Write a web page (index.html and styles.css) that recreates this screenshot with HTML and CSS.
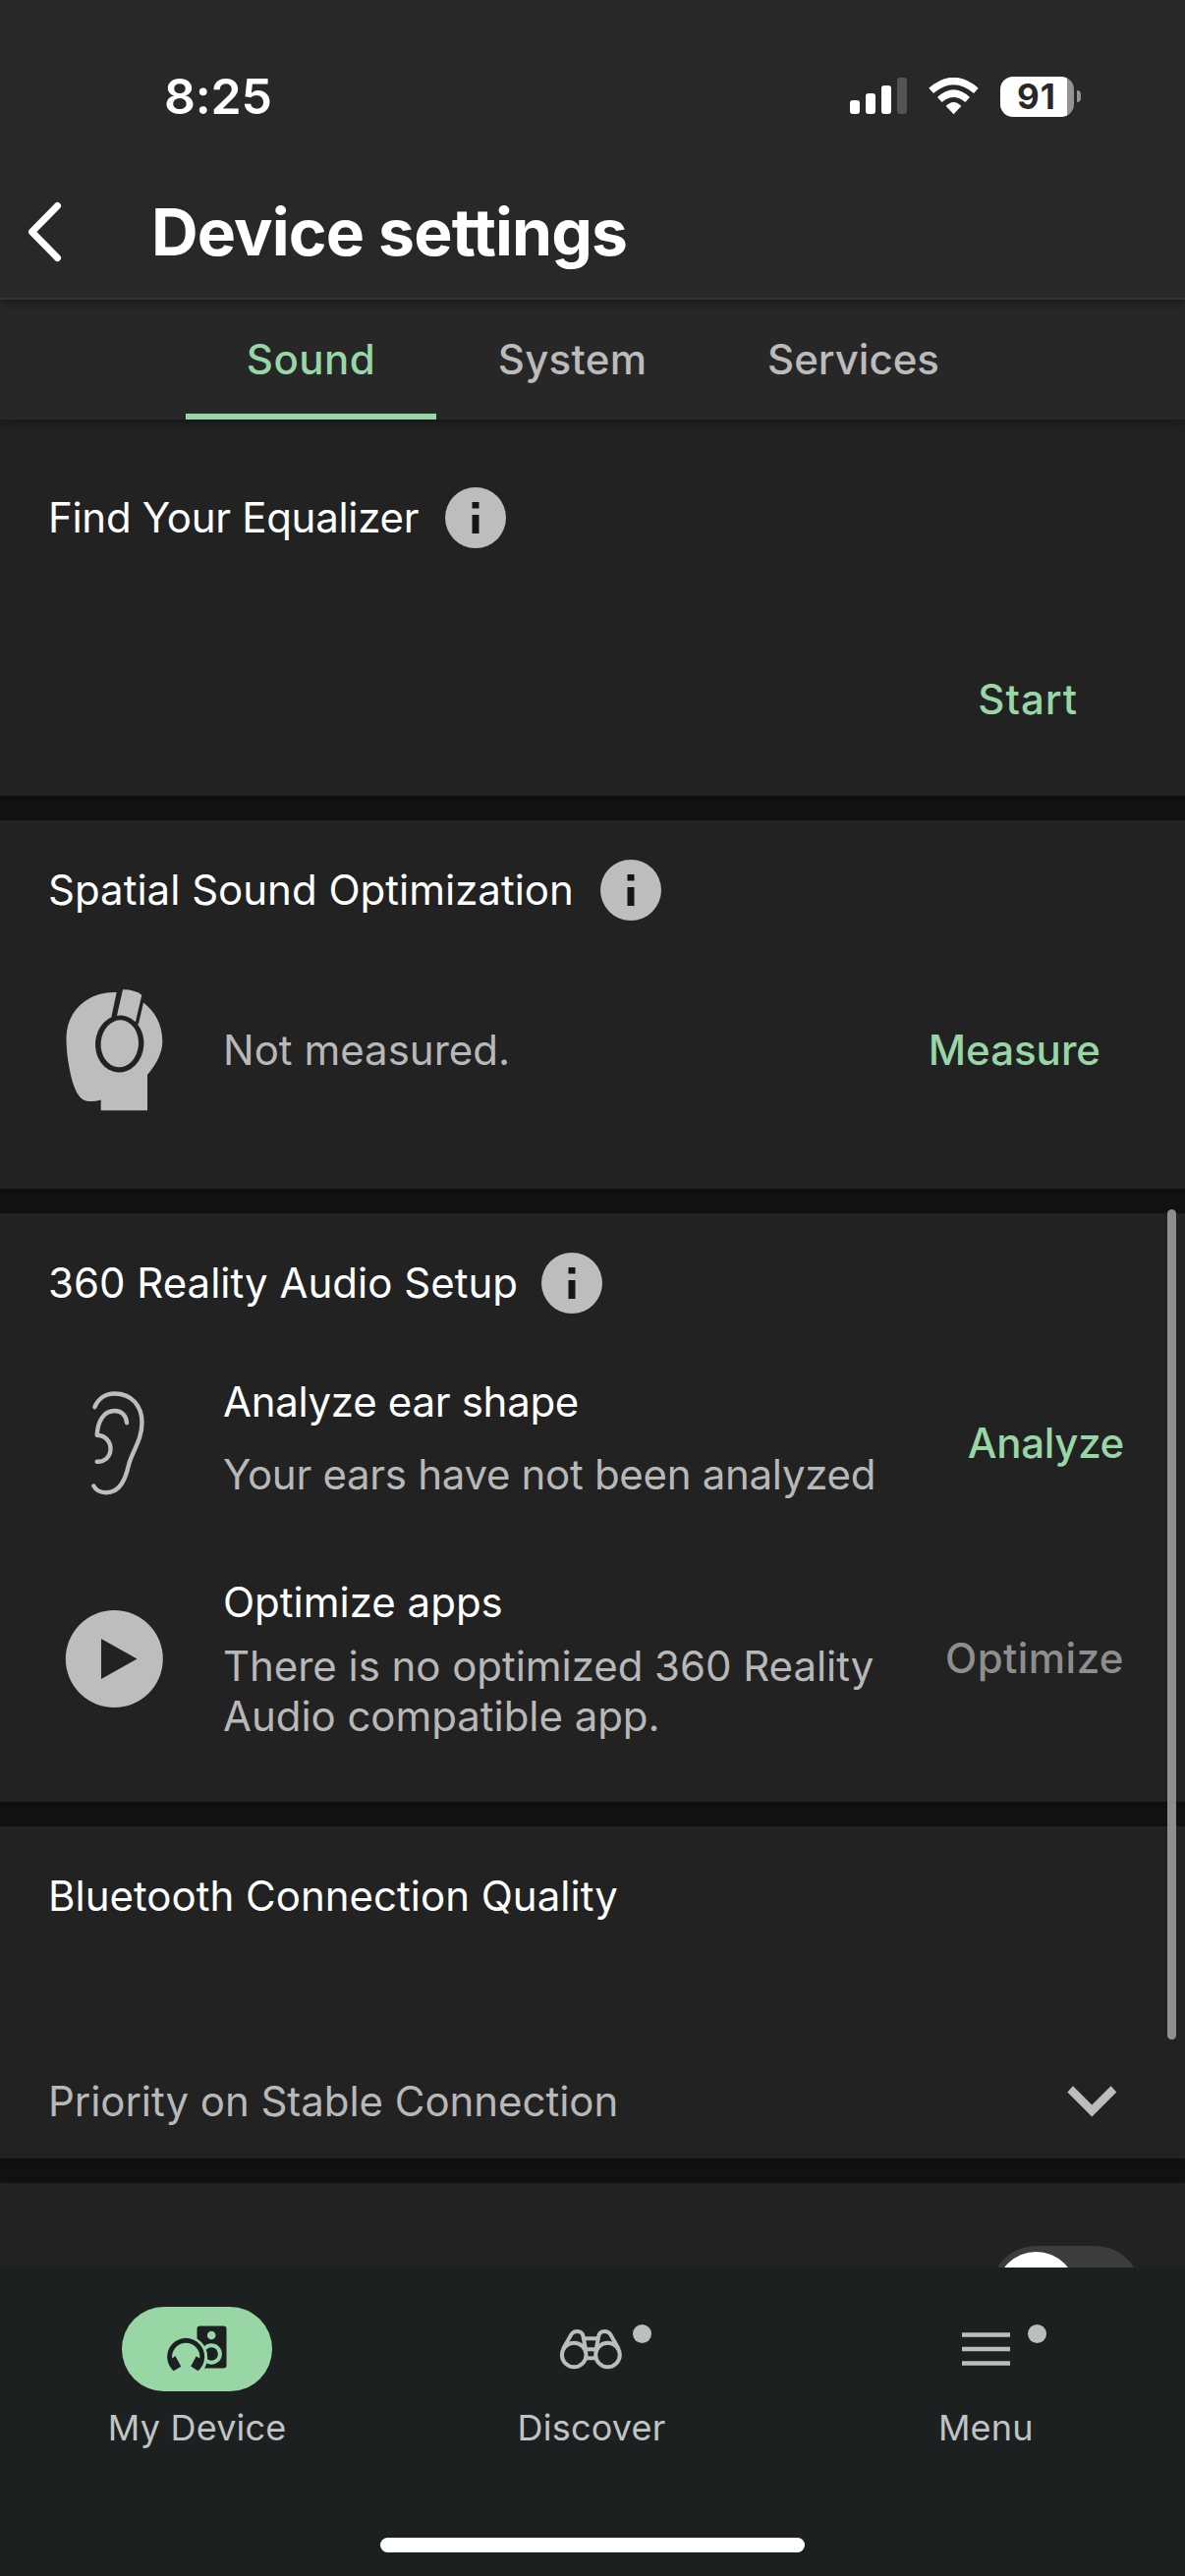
FILE: index.html
```
<!DOCTYPE html>
<html lang="en">
  <head>
    <meta charset="utf-8">
    <title>Device settings</title>
    <link rel="stylesheet" href="styles.css">
  </head>
  <body>
    <!-- status bar and title -->
    <header class="header">
      <div class="status-bar">
        <span class="time">8:25</span>
        <div class="status-icons">
          <svg width="58" height="38" viewBox="0 0 58 38" fill="#fff">
            <rect x="0" y="23" width="10" height="14" rx="3"/>
            <rect x="16" y="16" width="10" height="21" rx="3"/>
            <rect x="32" y="8" width="10" height="29" rx="3"/>
            <rect x="48" y="0" width="10" height="37" rx="3" fill="#535353"/>
          </svg>
          <svg width="51" height="38" viewBox="0 0 51 38" fill="#fff">
            <path d="M.3 10.7Q25.5 -11.3 50.7 10.7L46 16Q25.5 -1.4 5 16Z"/>
            <path d="M9 20Q25.5 4.6 42 20L37.3 25Q25.5 15 13.7 25Z"/>
            <path d="M17.7 29Q25.5 21 33.3 29L25.5 37.3Z"/>
          </svg>
          <div class="battery">
            <span class="battery-level">91</span>
            <span class="battery-tip"></span>
          </div>
        </div>
      </div>
      <div class="title-bar">
        <svg class="back" width="36" height="62" viewBox="0 0 36 62">
          <path d="M31.500 4.500L5.500 31L31.500 57.500"/>
        </svg>
        <h1>Device settings</h1>
      </div>
    </header>

    <nav class="tabs">
      <div class="tab tab-sound active">Sound</div>
      <div class="tab tab-system">System</div>
      <div class="tab tab-services">Services</div>
    </nav>

    <main class="content">
      <section class="card card-equalizer">
        <div class="card-title">
          <h2 class="tight">Find Your Equalizer</h2>
          <svg class="info" viewBox="0 0 62 62"><circle cx="31" cy="31" r="31"/><path d="M27.500 15h7v6.500h-7zM27.500 28h7v19h-7z"/></svg>
        </div>
        <div class="start-row"><span class="action wide">Start</span></div>
      </section>

      <section class="card card-spatial">
        <div class="card-title">
          <h2>Spatial Sound Optimization</h2>
          <svg class="info" viewBox="0 0 62 62"><circle cx="31" cy="31" r="31"/><path d="M27.500 15h7v6.500h-7zM27.500 28h7v19h-7z"/></svg>
        </div>
        <div class="row row-measure">
          <!-- head with headphones -->
          <svg class="row-icon" width="100" height="126" viewBox="0 0 100 126">
            <path class="fill" d="M52.700 4C24 3 2 22 1.500 50C1.500 60 2.500 70 4 78C8 101 14 116 26 115Q32 115 36.700 113.500V124.300H84V88Q99.300 70 99.300 54C99.300 36 91 23 80 14.500L75 36L60 45L47.300 29.500Z"/>
            <path class="fill" d="M59 1.200Q71 1 78.300 6.700L72 34L52.500 30Z"/>
            <ellipse class="hole" cx="55.700" cy="56.500" rx="24.700" ry="29" transform="rotate(4 55.700 56.500)"/>
            <ellipse class="fill" cx="55.800" cy="56.300" rx="19.200" ry="24" transform="rotate(4 55.800 56.300)"/>
          </svg>
          <div class="row-text"><p class="sub">Not measured.</p></div>
          <span class="action">Measure</span>
        </div>
      </section>

      <section class="card card-360">
        <div class="card-title">
          <h2>360 Reality Audio Setup</h2>
          <svg class="info" viewBox="0 0 62 62"><circle cx="31" cy="31" r="31"/><path d="M27.500 15h7v6.500h-7zM27.500 28h7v19h-7z"/></svg>
        </div>
        <div class="row row-analyze">
          <svg class="row-icon line" width="100" height="112" viewBox="-24 0 100 112">
            <path d="M6.400 19.100C10 10.500 17.500 5.500 26.700 5.500C44 5.500 54.500 18 54.500 35C54.500 53 44.500 64 41 78C38 91 33 106.200 17.900 106.200C12 106.200 7.500 103.500 5.300 99.500"/>
            <path d="M39 35.200C38.500 27.500 33.500 23 27 23C15 23 9.500 34 8.700 47.700C17 48 22.500 54 22.500 61.600C22.500 69.500 17 75 8.700 74.800"/>
          </svg>
          <div class="row-text">
            <p class="tight">Analyze ear shape</p>
            <p class="sub tight">Your ears have not been analyzed</p>
          </div>
          <span class="action tight">Analyze</span>
        </div>
        <div class="row row-optimize">
          <svg class="row-icon" width="100" height="100" viewBox="0 0 100 100">
            <circle class="fill" cx="50.300" cy="50.500" r="49.500"/>
            <path class="hole" d="M37 30V71L73.500 50.500Z"/>
          </svg>
          <div class="row-text">
            <p>Optimize apps</p>
            <p class="sub">There is no optimized 360 Reality<br>Audio compatible app.</p>
          </div>
          <span class="action disabled">Optimize</span>
        </div>
      </section>

      <section class="card card-bluetooth">
        <div class="card-title"><h2>Bluetooth Connection Quality</h2></div>
        <div class="select-row">
          <p class="sub">Priority on Stable Connection</p>
          <svg width="51" height="32" viewBox="0 0 51 32">
            <path class="fill" d="M6 .3L.3 6.400L25.300 31.400L50.300 6.400L44.600 .3L25.300 19.500Z"/>
          </svg>
        </div>
      </section>

      <section class="card card-switch">
        <div class="switch"><span class="knob"></span></div>
      </section>
    </main>
    <div class="scrollbar"></div>

    <!-- bottom navigation -->
    <footer class="bottom-nav">
      <div class="nav-items">
        <div class="nav-item">
          <div class="nav-icon selected">
            <svg width="62" height="48" viewBox="0 0 62 48">
              <rect x="30.500" y=".5" width="30" height="43" rx="3" fill="#1d2021"/>
              <circle cx="45.200" cy="10" r="4.300" fill="#98d6a6"/>
              <circle cx="45.200" cy="29" r="10.700" fill="#98d6a6"/>
              <circle cx="45.200" cy="29" r="6.700" fill="#1d2021"/>
              <circle cx="19.200" cy="32.300" r="22" fill="#98d6a6"/>
              <path fill="#1d2021" d="M6.800 46.300A19 19 0 1 1 31.500 46.300L24.200 41.500L29.800 31.300L33.200 33.500A14.100 14.100 0 1 0 5.200 33.500L8.400 31L14.200 41.700Z"/>
            </svg>
          </div>
          <span>My Device</span>
        </div>
        <div class="nav-item">
          <div class="nav-icon">
            <svg class="binoculars" width="66" height="44" viewBox="0 0 66 44">
              <circle cx="15.200" cy="28" r="12.300"/>
              <circle cx="49.500" cy="28" r="12.300"/>
              <path d="M4 22L12.500 7Q14.500 4 18.500 4Q23.500 4 24.500 9L27.500 25"/>
              <path d="M60.700 22L52.200 7Q50.200 4 46.200 4Q41.200 4 40.200 9L37.200 25"/>
              <path d="M25.500 11.300H39M27 22.300H38M27 31.300H38"/>
            </svg>
            <i class="dot"></i>
          </div>
          <span>Discover</span>
        </div>
        <div class="nav-item">
          <div class="nav-icon">
            <svg width="49" height="34" viewBox="0 0 49 34">
              <path d="M0 2.500H49M0 17H49M0 31.500H49" stroke="#bcbebe" stroke-width="4.500"/>
            </svg>
            <i class="dot"></i>
          </div>
          <span>Menu</span>
        </div>
      </div>
      <div class="home-bar"></div>
    </footer>
  </body>
</html>
```

FILE: styles.css
```
* {
  box-sizing: border-box;
}

body {
  margin: 0;
  width: 1206px;
  height: 2622px;
  display: flex;
  flex-direction: column;
  position: relative;
  overflow: hidden;
  background-color: #121212;
  color: #ffffff;
  font-family: Inter, sans-serif;
  font-size: 42px;
  line-height: 52px;
}

h1,
h2,
p {
  margin: 0;
  font-size: 42px;
  font-weight: 400;
}

svg {
  display: block;
  flex-shrink: 0;
}

/* header */
.header {
  height: 305px;
  flex-shrink: 0;
  padding-top: 26px;
  background-color: #282828;
  border-bottom: 2px solid #333333;
  box-shadow: 0 2px 12px rgba(0, 0, 0, 0.4);
  z-index: 3;
}

.status-bar {
  height: 144px;
  display: flex;
  justify-content: space-between;
  align-items: center;
  padding: 0 106px 0 167px;
}

.time {
  font-size: 50px;
  font-weight: 600;
  letter-spacing: -0.2px;
}

.status-icons {
  display: flex;
  align-items: center;
  gap: 22px;
}

.battery {
  display: flex;
  align-items: center;
  gap: 3px;
}

.battery-level {
  width: 75px;
  height: 41px;
  border-radius: 13px;
  background: linear-gradient(to right, #ffffff 68px, #939393 68px);
  color: #282828;
  font-size: 35px;
  font-weight: 700;
  line-height: 41px;
  letter-spacing: 1px;
  padding-left: 17px;
}

.battery-tip {
  width: 4px;
  height: 12px;
  border-radius: 0 4px 4px 0;
  background-color: #939393;
}

.title-bar {
  height: 131px;
  display: flex;
  align-items: center;
  padding-left: 27px;
  gap: 91px;
}

.back path {
  fill: none;
  stroke: #ffffff;
  stroke-width: 7;
  stroke-linecap: round;
  stroke-linejoin: round;
}

.title-bar h1 {
  font-size: 66px;
  font-weight: 700;
  line-height: 80px;
  letter-spacing: -0.85px;
}

/* tabs */
.tabs {
  height: 122px;
  flex-shrink: 0;
  display: flex;
  justify-content: center;
  background-color: #272727;
  box-shadow: 0 2px 12px rgba(0, 0, 0, 0.4);
  z-index: 2;
}

.tab {
  height: 122px;
  line-height: 121px;
  text-align: center;
  font-weight: 500;
  color: #bbbbbb;
}

.tab-sound {
  width: 255px;
  letter-spacing: 0.5px;
  padding-left: 1px;
}

.tab-system {
  width: 276px;
  letter-spacing: 0.3px;
  padding-left: 2px;
}

.tab-services {
  width: 298px;
}

.tab.active {
  color: #98d6a6;
  border-bottom: 6px solid #98d6a6;
}

/* cards */
.content {
  height: 1881px;
  flex-shrink: 0;
  display: flex;
  flex-direction: column;
  gap: 25px;
  overflow: hidden;
}

.card {
  flex-shrink: 0;
  padding-top: 40px;
  background-color: #222222;
  box-shadow: 0 2px 8px rgba(0, 0, 0, 0.3);
}

.card-equalizer {
  height: 383px;
  padding-top: 69px;
}

.card-spatial {
  height: 375px;
}

.card-360 {
  height: 599px;
}

.card-bluetooth {
  height: 338px;
}

.card-switch {
  height: 160px;
  padding: 64px 45px 0 0;
}

.card-title {
  height: 62px;
  display: flex;
  align-items: center;
  gap: 27px;
  padding-left: 49px;
}

.card-360 .card-title {
  gap: 24px;
}

.info {
  width: 62px;
  height: 62px;
  fill: #151515;
}

.info circle,
.fill {
  fill: #bdbdbd;
}

.hole {
  fill: #222222;
}

.tight {
  letter-spacing: -0.3px;
}

.wide {
  letter-spacing: 1px;
}

.sub {
  color: #b8b8b8;
}

.action {
  color: #98d6a6;
  font-weight: 500;
}

.action.disabled {
  color: #8e8e8e;
  letter-spacing: 0.45px;
}

.start-row {
  margin-top: 123px;
  height: 62px;
  display: flex;
  align-items: center;
  justify-content: flex-end;
  padding-right: 109px;
}

.row {
  display: flex;
  align-items: center;
  padding: 0 62px 0 66px;
  gap: 61px;
}

.row-text {
  flex: 1;
  white-space: nowrap;
}

.row-measure {
  height: 124px;
  margin-top: 70px;
  padding-right: 86px;
}

.row-analyze {
  height: 136px;
  margin-top: 64px;
}

.row-analyze .row-text {
  align-self: flex-start;
}

.row-analyze .sub {
  margin-top: 22px;
}

.row-optimize {
  height: 168px;
  margin-top: 67px;
}

.row-optimize .sub {
  margin-top: 13px;
  line-height: 51px;
  letter-spacing: -0.05px;
}

.line path {
  fill: none;
  stroke: #bdbdbd;
  stroke-width: 4.4;
  stroke-linecap: round;
  stroke-linejoin: round;
}

.select-row {
  margin-top: 147px;
  height: 62px;
  display: flex;
  align-items: center;
  justify-content: space-between;
  padding: 0 69px 0 49px;
  letter-spacing: -0.05px;
}

.switch {
  width: 153px;
  height: 93px;
  margin-left: auto;
  padding: 6px;
  border-radius: 47px;
  background-color: #3c3c3e;
}

.knob {
  display: block;
  width: 81px;
  height: 81px;
  border-radius: 50%;
  background-color: #ffffff;
}

/* scroll indicator lies over the cards */
.scrollbar {
  position: absolute;
  top: 1231px;
  right: 9px;
  width: 9px;
  height: 845px;
  border-radius: 5px;
  background-color: #8e8e8e;
}

/* bottom navigation */
.bottom-nav {
  height: 314px;
  flex-shrink: 0;
  padding-top: 40px;
  background-color: #1d2021;
  z-index: 1;
}

.nav-items {
  display: grid;
  grid-template-columns: repeat(3, 1fr);
  padding-right: 2px;
}

.nav-item {
  display: flex;
  flex-direction: column;
  align-items: center;
  gap: 15px;
  color: #c0c4c3;
  font-size: 36px;
  line-height: 44px;
  letter-spacing: 0.2px;
}

.nav-icon {
  position: relative;
  width: 153px;
  height: 86px;
  border-radius: 43px;
  display: flex;
  align-items: center;
  justify-content: center;
}

.nav-icon.selected {
  background-color: #98d6a6;
}

.binoculars {
  fill: none;
  stroke: #bcbebe;
  stroke-width: 4;
}

.dot {
  position: absolute;
  top: 18px;
  right: 15px;
  width: 19px;
  height: 19px;
  border-radius: 50%;
  background-color: #bcbebe;
}

.home-bar {
  width: 432px;
  height: 15px;
  margin: 90px auto 0;
  border-radius: 8px;
  background-color: #ffffff;
}
```
